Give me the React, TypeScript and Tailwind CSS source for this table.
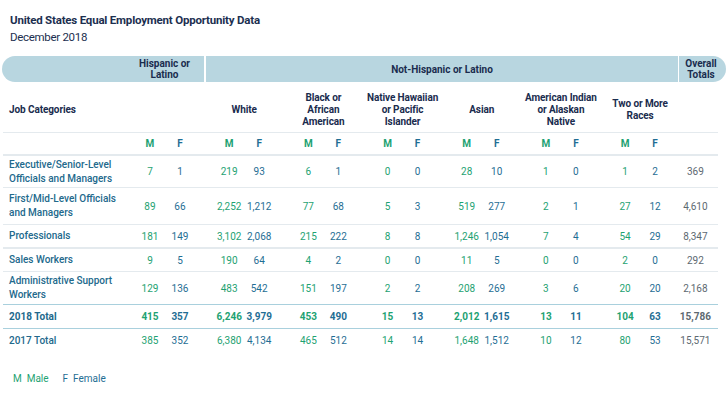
const groups = [
  { name: ['White'] },
  { name: ['Black or', 'African', 'American'] },
  { name: ['Native Hawaiian', 'or Pacific', 'Islander'] },
  { name: ['Asian'] },
  { name: ['American Indian', 'or Alaskan', 'Native'] },
  { name: ['Two or More', 'Races'] },
]

type Row = {
  label: string[]
  h: string
  values: string[]
  total: string
  bold?: boolean
  border: string
}

const rows: Row[] = [
  {
    label: ['Executive/Senior-Level', 'Officials and Managers'],
    h: 'h-[33px]',
    border: 'border-t-2 border-[#e4eaee]',
    values: ['7', '1', '219', '93', '6', '1', '0', '0', '28', '10', '1', '0', '1', '2'],
    total: '369',
  },
  {
    label: ['First/Mid-Level Officials', 'and Managers'],
    h: 'h-[37px]',
    border: 'border-t border-[#e4eaee]',
    values: ['89', '66', '2,252', '1,212', '77', '68', '5', '3', '519', '277', '2', '1', '27', '12'],
    total: '4,610',
  },
  {
    label: ['Professionals'],
    h: 'h-[23px]',
    border: 'border-t border-[#e4eaee]',
    values: ['181', '149', '3,102', '2,068', '215', '222', '8', '8', '1,246', '1,054', '7', '4', '54', '29'],
    total: '8,347',
  },
  {
    label: ['Sales Workers'],
    h: 'h-[24px]',
    border: 'border-t-2 border-[#e4eaee]',
    values: ['9', '5', '190', '64', '4', '2', '0', '0', '11', '5', '0', '0', '2', '0'],
    total: '292',
  },
  {
    label: ['Administrative Support', 'Workers'],
    h: 'h-[33px]',
    border: 'border-t border-[#e4eaee]',
    values: ['129', '136', '483', '542', '151', '197', '2', '2', '208', '269', '3', '6', '20', '20'],
    total: '2,168',
  },
  {
    label: ['2018 Total'],
    h: 'h-[24px]',
    border: 'border-t border-[#a9d0dd]',
    bold: true,
    values: ['415', '357', '6,246', '3,979', '453', '490', '15', '13', '2,012', '1,615', '13', '11', '104', '63'],
    total: '15,786',
  },
  {
    label: ['2017 Total'],
    h: 'h-[24px]',
    border: 'border-t border-[#a9d0dd]',
    values: ['385', '352', '6,380', '4,134', '465', '512', '14', '14', '1,648', '1,512', '10', '12', '80', '53'],
    total: '15,571',
  },
]

function Pair({ m, f, bold }: { m: string; f: string; bold?: boolean }) {
  return (
    <div className="flex w-[79.2px] shrink-0 justify-center">
      <div className={`w-[30px] text-center text-[#1ea272] ${bold ? 'font-bold' : ''}`}>{m}</div>
      <div className={`w-[30px] text-center text-[#1f6e94] ${bold ? 'font-bold' : ''}`}>{f}</div>
    </div>
  )
}

export default function App() {
  return (
    <div className="h-[400px] w-[728px] bg-white font-['Roboto',sans-serif] text-[10px]">
      <div className="px-[10px] pt-[12px] text-[#1c2f50]">
        <div className="text-[11.5px] font-bold leading-[16px] tracking-[-0.2px]">
          United States Equal Employment Opportunity Data
        </div>
        <div className="mt-[1px] text-[11.5px] leading-[16px] tracking-[-0.3px]">December 2018</div>
      </div>

      {/* top band */}
      <div className="mx-[2px] mt-[11px] flex h-[26px] items-stretch rounded-full bg-[#b8d6e0] font-bold leading-[11px] text-[#1a2c4e]">
        <div className="w-[123px]" />
        <div className="flex w-[81px] items-center justify-center border-r-2 border-white text-center">
          Hispanic or
          <br />
          Latino
        </div>
        <div className="flex flex-1 items-center justify-center border-r border-white">
          Not-Hispanic or Latino
        </div>
        <div className="flex w-[47px] items-center justify-center pr-[3px] text-center">
          Overall
          <br />
          Totals
        </div>
      </div>

      <div className="ml-[3px] w-[715px]">
        {/* group names */}
        <div className="flex h-[50px] items-center pt-[5px] font-bold leading-[12px] tracking-[-0.1px] text-[#1a2c4e]">
          <div className="w-[122.4px] shrink-0 pl-[6px]">Job Categories</div>
          <div className="w-[79.2px] shrink-0" />
          {groups.map((g) => (
            <div key={g.name.join(' ')} className="w-[79.2px] shrink-0 text-center">
              {g.name.map((n) => (
                <div key={n}>{n}</div>
              ))}
            </div>
          ))}
          <div className="flex-1" />
        </div>

        {/* M / F */}
        <div className="flex h-[22px] items-center border-t border-[#e4eaee] font-bold">
          <div className="w-[122.4px] shrink-0" />
          {Array.from({ length: 7 }).map((_, i) => (
            <Pair key={i} m="M" f="F" bold />
          ))}
          <div className="flex-1" />
        </div>

        {rows.map((r) => (
          <div key={r.label[0]} className={`flex items-center ${r.h} ${r.border}`}>
            <div
              className={`w-[122.4px] shrink-0 pl-[6px] leading-[14px] text-[#22698c] ${r.bold ? 'font-bold' : 'font-medium'}`}
            >
              {r.label.map((l) => (
                <div key={l}>{l}</div>
              ))}
            </div>
            {Array.from({ length: 7 }).map((_, i) => (
              <Pair key={i} m={r.values[i * 2]} f={r.values[i * 2 + 1]} bold={r.bold} />
            ))}
            <div className={`flex-1 pr-[7px] text-center text-[#5d6971] ${r.bold ? 'font-bold' : ''}`}>
              {r.total}
            </div>
          </div>
        ))}
      </div>

      <div className="mt-[21px] flex pl-[13px] text-[10px] leading-[12px]">
        <span className="text-[#1ea272]">M&nbsp;&nbsp;Male</span>
        <span className="ml-[14px] text-[#1f6e94]">F&nbsp;&nbsp;Female</span>
      </div>
    </div>
  )
}
